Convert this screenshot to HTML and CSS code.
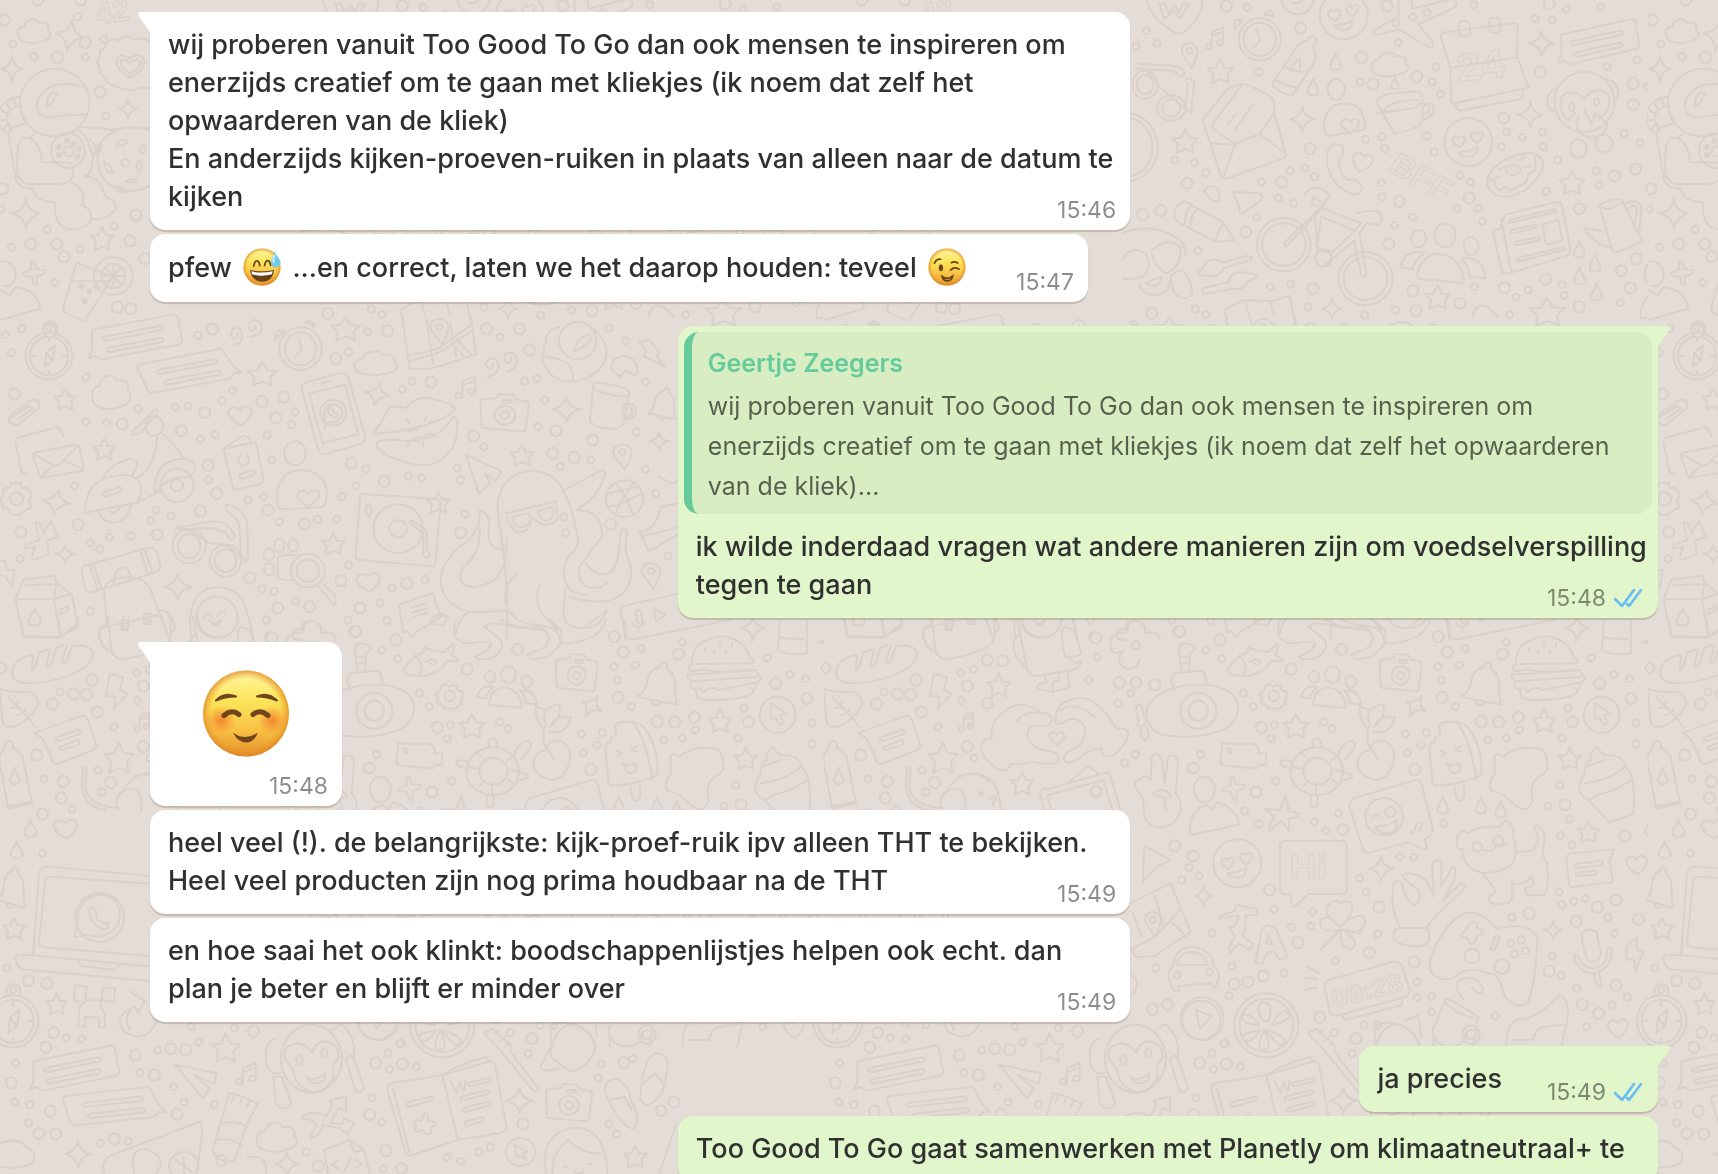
FILE: index.html
```html
<!DOCTYPE html>
<html lang="nl">
<head>
<meta charset="utf-8">
<meta name="viewport" content="width=device-width, initial-scale=1">
<title>Chat met Geertje Zeegers</title>
<link rel="stylesheet" href="styles.css">
</head>
<body>
<svg class="wallpaper" aria-hidden="true">
  <defs>
    <path id="star" d="M0-36L12-11L34-9L19 9L23 34L1 23L-21 35L-18 8L-33-9L-11-11Z"/>
    <path id="spark" d="M0-38Q3-5 33 0Q5 6 0 38Q-5 6-33 0Q-5-5 0-38Z"/>
    <path id="heart" d="M0-14C12-36 36-20 26 2Q20 18 4 32Q-20 16-26-2C-28-22-8-28 0-14Z"/>
    <path id="drop" d="M0-26C3-10 16 2 14 14C12 28-12 28-14 14C-15 2-3-10 0-26Z"/>
    <path id="note" d="M-12 30V-12L18-26V20M-12 30a8 8 0 1 1-8-8q8 0 8 8M18 20a8 8 0 1 1-8-8q8 0 8 8M-12 0L18-14"/>
    <path id="cloud" d="M-44 30C-60 4-44-10-32-10C-26-36 6-38 12-22C34-26 46-14 40-2C58 16 40 30 28 32Q-10 48-44 30Z"/>
    <g id="pin"><path d="M6 40C0 22-20 4-20-14C-20-46 22-44 22-12C22 6 14 22 6 40Z"/><ellipse cx="1" cy="-13" rx="8" ry="9"/></g>
    <g id="camera"><path d="M-48-38L-20-42L-14-54L20-52L26-38L50-32Q56-30 56-22L48 52Q46 60 38 58L-48 48Q-56 46-54 38L-56-30Q-56-38-48-38Z"/><ellipse rx="24" ry="28" cy="10"/><ellipse rx="10" ry="11" cy="10"/><path d="M-4-36H16V-28H-4Z"/></g>
    <g id="bell"><path d="M-60 50C-20 20-50-44 0-62Q4-80 16-74Q26-66 16-56C52-30 34 20 46 80Z"/><path d="M-24 66q10 26 28 6"/></g>
    <g id="mail"><path d="M-64-12L40-42Q50-44 52-34L64 46Q64 54 56 56L-40 82Q-48 84-50 74L-66 0Q-68-10-64-12ZM-64-8L-14 36L0 34L48-38M-46 78L-14 36M62 50L14 18"/></g>
    <g id="chat"><path d="M-100-30L84-76Q96-78 98-68L108 0Q108 10 98 14L-76 58L-94 48L-108 54L-100 30Z"/><path d="M-72-10L56-42q12 0 6 12L-66 2q-12-2-6-12ZM-64 24L56-6q12 0 6 12L-58 36q-12-2-6-12Z"/></g>
    <g id="people"><ellipse cx="0" cy="-52" rx="28" ry="36"/><ellipse cx="-70" cy="-42" rx="20" ry="26"/><ellipse cx="70" cy="-20" rx="20" ry="26"/><path d="M-74 72C-70-22 44-18 50 84Q50 94 40 90L-70 78ZM-120 44C-110 0-80-8-56 2Q-76 14-86 50ZM44 18C80 10 104 30 108 76L66 72Q62 36 44 18Z"/></g>
    <g id="smile"><ellipse rx="64" ry="72"/><path d="M-26 30Q4 28 24 16Q24 42 2 44Q-18 44-26 30Z"/><use href="#heart" transform="translate(-26 -2) scale(.6)"/><use href="#heart" transform="translate(22 -16) scale(.6)"/></g>
    <g id="compass"><ellipse rx="54" ry="70"/><ellipse rx="44" ry="58"/><path d="M-10 32L-6-10L14-32L8 14ZM-6-10L8 14M0-56v12M0 44v12M-42 0h10M32 0h10"/><path d="M-10-68C-30-108 30-112 12-68"/><ellipse cy="-84" rx="7" ry="8"/></g>

    <symbol id="tile" viewBox="0 0 824 1174" width="824" height="1174">
      <!-- upper right part of the tile -->
      <g transform="translate(306 0) scale(.375 .3333)">
        <path d="M44-10C44 40 90 80 130 104C160 90 200 40 192-10M78 12L92 58L118 34L134 56L158 10L140 12L132 38L118 14L104 40L92 10Z"/>
        <use href="#note" x="230" y="108"/><use href="#pin" x="158" y="166"/><use href="#star" x="240" y="214"/>
        <ellipse cx="346" cy="118" rx="56" ry="63"/><ellipse cx="346" cy="118" rx="43" ry="50"/><path d="M336 88L348 118L332 142M358 44q16-24 26 4ZM278 86q-4-34 22-24Z"/>
        <path d="M404-10C404 60 490 60 490-10M434 8q20 4 26-10"/>
        <use href="#smile" x="570" y="46"/>
        <path d="M716-10V48L660 86Q640 104 664 104L718 88L794 140Q816 148 804 118L768 74L860 26Q880 12 862-4L752 26V-10"/>
        <path d="M476 114q6-10 20 0q4 10-8 24q14 30 0 56L434 284Q428 294 384 262Q376 256 386 240L446 138Q460 120 474 124ZM410 196Q440 224 482 212M386 240Q420 260 446 262"/><use href="#drop" transform="translate(446 194) rotate(20) scale(.8)"/>
        <use href="#drop" x="548" y="186"/><use href="#drop" x="488" y="262"/><use href="#drop" transform="translate(706 250) scale(.7)"/><use href="#cloud" x="694" y="190"/>
        <path d="M832 98L1024 70Q1034 70 1034 82L1032 172L1064 262L866 310Q858 310 856 300L854 204L828 108ZM854 204L1032 172M866 310L876 332L1046 296L1048 270"/><rect x="876" y="64" width="30" height="44" rx="12"/><rect x="958" y="54" width="30" height="44" rx="12"/>
        <text x="876" y="246" font-size="118" transform="rotate(-8 876 246)">24</text>
        <use href="#spark" x="1097" y="130"/><use href="#chat" x="1250" y="134"/><use href="#cloud" transform="translate(1480 92) scale(.8 1)"/><use href="#spark" x="1414" y="208"/><use href="#spark" x="1068" y="344"/><use href="#spark" x="460" y="358"/>
        <path d="M24 192L110 196Q150 204 144 226Q136 236 118 214L40 206M148 240Q166 226 172 252L162 340L148 326L154 250M14 206L40 206L80 262L148 326"/><ellipse cx="40" cy="254" rx="34" ry="42"/><ellipse cx="110" cy="324" rx="38" ry="38"/><ellipse cx="40" cy="254" rx="22" ry="28"/><ellipse cx="110" cy="324" rx="24" ry="26"/>
        <ellipse cx="-10" cy="442" rx="84" ry="102"/><ellipse cx="-10" cy="442" rx="70" ry="88"/>
        <path d="M264 262L300 252Q312 250 372 288Q384 296 384 310L386 344L416 462Q416 472 406 476L262 534Q248 538 242 526L196 370Q194 356 202 348ZM300 252L222 370Q216 382 224 390L280 432L346 402L382 342M214 430L280 434M250 528L280 434M346 402L414 460M280 388L326 316M262 372L282 342"/>
        <ellipse cx="550" cy="268" rx="23" ry="32"/><path d="M520 404C510 350 530 310 572 310C610 310 628 340 626 388L530 408ZM586 400L564 378C560 354 584 350 588 366C600 346 616 360 608 380Z"/>
        <path d="M658 308Q660 290 690 282L756 274Q782 274 780 296V360Q770 390 704 400ZM658 340L760 324L780 306M674 336Q690 300 770 300M782 318Q800 300 810 320Q812 350 780 360M782 342Q800 340 798 320"/>
        <use href="#star" x="146" y="424"/><use href="#smile" x="902" y="426"/>
        <path d="M528 450Q540 426 566 436L568 462L556 484Q560 520 578 540L602 538L620 562Q616 588 590 582C540 560 516 500 528 450Z"/><use href="#heart" transform="translate(618 484) rotate(20)"/>
        <text x="684" y="510" font-size="92" transform="rotate(32 684 510)">BFF</text>
        <path d="M960 520Q990 468 1070 458Q1104 466 1102 500Q1080 570 1010 590Q950 590 952 540ZM954 546Q968 520 976 560Q986 578 1000 560Q1016 580 1030 560Q1060 556 1062 520Q1088 520 1080 470"/><ellipse cx="1022" cy="510" rx="20" ry="15"/><path d="M1000 500l-18 10M1040 480l12-8M1050 500l16 0M990 530l-14 4"/>
        <ellipse cx="1212" cy="306" rx="80" ry="90"/><path d="M1148 300C1150 270 1200 270 1212 300C1220 264 1274 260 1278 296C1280 330 1270 340 1250 360M1148 300Q1144 340 1168 360L1186 340M1140 262Q1104 280 1116 320Q1124 336 1134 330M1262 236Q1300 240 1302 280Q1300 300 1292 300M1196 352Q1180 400 1230 414Q1270 410 1272 370L1240 340L1230 372L1212 332"/><ellipse cx="1178" cy="320" rx="7" ry="12"/><ellipse cx="1244" cy="306" rx="7" ry="12"/><ellipse cx="1196" cy="446" rx="22" ry="28"/><ellipse cx="1264" cy="430" rx="23" ry="26"/>
        <use href="#star" x="1178" y="548"/>
        <path d="M466 584Q478 556 512 566L532 584L512 624L616 670L600 692L540 756L498 740L510 650L596 690M512 624L416 740L410 730L516 614L490 590L484 612ZM606 640Q630 628 664 634Q680 660 662 674L632 668L612 700L630 820Q624 840 616 824L598 722L520 794M494 654L500 760"/>
        <ellipse cx="410" cy="734" rx="72" ry="80"/><ellipse cx="410" cy="734" rx="58" ry="64"/><ellipse cx="628" cy="836" rx="72" ry="80"/><ellipse cx="628" cy="836" rx="58" ry="64"/><ellipse cx="516" cy="776" rx="22" ry="24"/>
        <path d="M276 576L344 580Q360 590 350 600L300 640Q290 642 292 626ZM198 572Q210 548 234 566L240 606Q210 604 198 572M118 650Q120 610 146 604L250 668L278 720L230 726L124 664ZM146 670Q150 630 164 616M160 680Q164 640 182 626M228 722Q234 690 250 670"/>
        <path d="M-20 700Q50 666 120 710Q150 730 148 766M-20 780Q0 730 44 764Q60 800 36 830Q10 840-20 836M60 750Q100 710 134 740Q140 800 96 820Q66 800 58 760M108 830Q120 810 140 812Q170 850 164 884Q140 910 116 874ZM24 850Q30 886 70 886Q104 880 108 840M44 850Q60 836 86 832Q76 864 56 858Z"/>
        <path d="M180 812Q196 812 202 786Q230 770 246 788L310 768Q330 766 322 780L250 804Q236 836 206 826L186 828ZM192 866L264 846Q266 816 296 816L336 824Q342 836 316 842Q300 874 276 866L200 882Q188 880 192 866Z"/>
        <use href="#people" x="840" y="758"/>
        <path d="M1000 644L1138 606Q1150 604 1152 616L1174 746Q1174 764 1160 770L1010 820Q996 824 992 812L968 700Q968 688 986 686ZM990 656L1016 814M1012 660l120-32q8 2 4 8l-120 32q-10 0-4-8ZM1018 690l60-16q8 2 4 8l-60 18q-10 0-4-10ZM1028 726l60-14q8 2 4 8l-60 16q-10 0-4-10ZM1034 774l120-32q8 2 4 8l-120 34q-10 0-4-10ZM1100 672l42-12l12 60l-38 14q-8 0-8-10Z"/>
        <path d="M1252 616Q1276 596 1310 598L1366 724L1300 756Q1290 760 1284 746ZM1252 620Q1276 640 1316 604M1284 742Q1240 740 1212 684L1258 694M1322 610Q1352 594 1364 620L1358 690M1328 628Q1344 606 1352 630L1346 666"/>
        <use href="#drop" x="1198" y="748"/><use href="#drop" x="1240" y="790"/><use href="#drop" x="1198" y="828"/><use href="#drop" x="1244" y="876"/>
        <use href="#spark" transform="translate(1456 638) scale(1.2)"/><ellipse cx="1400" cy="822" rx="28" ry="38"/>
        <path d="M1362 956C1358 900 1390 880 1406 868L1416 886L1430 862C1470 868 1490 900 1490 928Z"/>
        <path d="M1470 786Q1480 780 1484 806L1506 808Q1512 818 1486 826Q1490 856 1480 854L1472 830L1450 832Q1444 820 1466 816Z"/>
        <use href="#star" x="820" y="892"/><use href="#spark" transform="translate(538 926) scale(.8)"/><use href="#star" transform="translate(1112 936) scale(1.4 1.2)"/>
        <path d="M260 980L252 928L304 900L374 904L426 888L442 980M308 906L318 950M376 910L384 950M914 950Q920 910 950 918L980 950"/>
        <path d="M1568 206C1400 196 1400 410 1560 410M1440 290Q1380 300 1380 360Q1384 400 1410 404M1450 374Q1410 376 1410 400L1432 540Q1440 566 1470 568M1568 260Q1500 240 1486 320Q1490 360 1568 344"/>
        <g class="rings"><path id="r1" d="M257 18h.1M455 84h.1M617 172h.1M765 230h.1M648 252h.1M480 446h.1M152 550h.1M34 644h.1M82 632h.1M308 696h.1M404 546h.1M718 604h.1M1094 216h.1M996 354h.1M1342 250h.1M1342 314h.1M1398 60h.1M1118 12h.1M686 18h.1M1348 508h.1M1292 528h.1M1392 566h.1M1310 812h.1M1334 864h.1M1108 838h.1M1198 626h.1M1538 734h.1M1350 776h.1M998 864h.1M880 910h.1M754 872h.1M488 866h.1M690 732h.1M762 932h.1M1198 920h.1M904 594h.1M58 940h.1M1538 174h.1"/><use href="#r1" class="core"/></g>
        <g class="rings small"><path id="r2" d="M16 138h.1M72 130h.1M44 92h.1M312 22h.1M344 216h.1M120 480h.1M172 488h.1M202 518h.1M350 546h.1M426 512h.1M466 504h.1M492 530h.1M396 594h.1M436 610h.1M338 652h.1M182 752h.1M374 860h.1M428 852h.1M174 928h.1M202 944h.1M474 922h.1M716 128h.1M816 200h.1M806 246h.1M828 282h.1M614 246h.1M628 418h.1M672 410h.1M680 446h.1M792 408h.1M812 456h.1M670 548h.1M672 590h.1M880 526h.1M908 546h.1M872 626h.1M928 624h.1M940 664h.1M706 676h.1M754 652h.1M1004 396h.1M1046 412h.1M1100 396h.1M1102 440h.1M990 440h.1M1140 480h.1M1110 574h.1M1244 512h.1M1250 556h.1M1318 400h.1M1360 428h.1M1272 200h.1M1352 180h.1M1380 260h.1M1420 132h.1M1478 170h.1M1080 56h.1M1126 60h.1M1164 28h.1M1256 20h.1M916 14h.1M754 52h.1M792 38h.1M710 68h.1M1390 628h.1M1418 740h.1M1468 732h.1M1512 688h.1M1532 848h.1M1152 854h.1M1158 886h.1M1062 870h.1M1030 892h.1M1012 944h.1M918 860h.1M708 930h.1M626 946h.1M1308 908h.1"/><use href="#r2" class="core"/></g>
      </g>
      <!-- upper left part: astronaut and lemonade -->
      <g transform="scale(.3333)">
        <use href="#cloud" x="104" y="90"/><use href="#spark" transform="translate(210 106) rotate(10) scale(1.3)"/><use href="#spark" x="36" y="206"/>
        <text x="290" y="74" font-size="92" transform="rotate(-8 290 74)">42</text>
        <ellipse cx="164" cy="308" rx="104" ry="102"/><path d="M262 266C220 246 150 240 118 290C100 330 120 352 150 352C200 340 230 348 260 342M140 312Q142 284 162 276Q178 280 160 302Q146 326 140 312Z"/>
        <path d="M62 288Q0 300-10 350Q0 390 24 404M66 316Q30 320 20 350Q22 370 30 384M40 294l8 24M18 308l12 20M4 330l18 12M0 360h20M6 386l18-10M74 372Q26 376 26 410L48 540Q60 566 96 566M52 520Q48 420 70 412Q120 412 126 486L210 488Q224 500 218 530Q210 556 150 552H90Q56 548 52 520M90 412L104 402M96 552Q100 606 160 606H166Q158 690 220 688Q274 680 274 650Q272 620 240 614L250 616Q254 556 214 548M238 390Q270 420 278 470Q278 520 254 528Q300 530 316 590Q352 600 346 630Q320 660 276 658M280 470Q300 440 270 420"/>
        <ellipse cx="204" cy="452" rx="50" ry="52"/><ellipse cx="206" cy="454" rx="15" ry="15"/>
        <path d="M320 128Q340 110 356 122Q380 100 404 120Q430 110 450 124M320 128Q316 150 300 150Q304 170 290 186Q306 208 298 220Q320 230 318 244Q336 256 346 258Q370 270 384 268Q400 276 420 264H450M390 232Q350 212 350 186Q352 152 388 176Q424 152 434 186Q430 212 390 232ZM390 220Q362 206 362 186Q370 170 390 188Q412 170 422 188Q416 208 390 220Z"/>
        <path d="M242 382Q280 380 330 390Q390 380 450 384M450 392Q400 370 344 394Q280 420 296 500Q310 560 370 572Q420 576 450 558M288 462Q286 430 304 432Q304 460 288 462ZM348 436Q360 414 384 422Q372 444 348 436ZM312 486Q330 490 340 520Q316 520 312 486ZM344 560Q370 558 380 574Q360 586 344 560ZM378 544Q396 532 410 544Q396 550 378 544Z"/><ellipse cx="376" cy="488" rx="12" ry="11"/><ellipse cx="418" cy="498" rx="8" ry="14"/><ellipse cx="428" cy="448" rx="9" ry="12"/>
        <use href="#spark" transform="translate(384 326) scale(.8)"/><use href="#spark" transform="translate(78 640) scale(1.3 1.2)"/><use href="#star" x="306" y="716"/>
        <path d="M230 788L338 830L256 960Q252 966 196 938Q188 934 190 922ZM218 844H326"/><ellipse cx="340" cy="828" rx="58" ry="57"/><ellipse cx="340" cy="828" rx="35" ry="37"/><path d="M306 828h68M340 792v72M316 802l48 52M364 802l-48 52"/>
        <path d="M94 784Q104 780 108 806L136 812Q138 824 110 828L112 854Q102 860 96 832L68 826Q66 814 92 810Z"/>
        <path d="M0 784Q46 780 48 830Q40 860 10 858M0 870L30 886L46 862Q116 870 120 926L0 960"/><ellipse cx="150" cy="988" rx="22" ry="24"/>
        <g class="rings"><path id="r3" d="M14 60h.1M242 0h.1M172 172h.1M256 128h.1M300 276h.1M8 566h.1M408 646h.1M92 732h.1M170 732h.1M192 770h.1M390 722h.1M352 922h.1M392 926h.1M114 0h.1M434 776h.1"/><use href="#r3" class="core"/></g>
        <g class="rings small"><path id="r4" d="M38 132h.1M102 170h.1M256 172h.1M232 50h.1M312 118h.1M318 348h.1M4 628h.1M142 688h.1M342 678h.1M240 748h.1M34 742h.1M164 848h.1"/><use href="#r4" class="core"/></g>
        <path class="dots" d="M245 860h.1M290 860h.1M268 874h.1M254 904h.1M200 422h.1M222 430h.1M176 440h.1M178 464h.1M236 446h.1M232 470h.1"/>
      </g>
      <!-- middle band -->
      <g transform="translate(0 320) scale(.4337 .3333)">
        <use href="#compass" x="113" y="108"/><use href="#chat" transform="translate(312 60)"/><use href="#chat" transform="translate(436 160) scale(-1 1) rotate(28)"/>
        <path d="M540 74Q560 70 558 44Q556 22 542 24Q526 34 536 54Q550 58 548 40M580 50Q606 44 604 20Q600-6 580 2Q566 18 578 30Q590 34 588 16M1126 170Q1152 160 1150 136Q1146 110 1128 116Q1112 130 1126 144Q1140 148 1136 130M1168 154Q1194 146 1192 120Q1188 94 1170 98Q1156 112 1168 128Q1180 132 1178 112"/>
        <ellipse cx="693" cy="86" rx="49" ry="64"/><ellipse cx="693" cy="86" rx="36" ry="50"/><path d="M688 54L696 88L680 112M634 58q0-34 22-26ZM704 8q14-14 22 12Z"/>
        <use href="#star" x="796" y="26"/><use href="#star" x="604" y="162"/><use href="#star" transform="translate(150 238) scale(.75 .9)"/><use href="#star" transform="translate(240 388) scale(.75 .9)"/><use href="#cloud" x="868" y="126"/><use href="#cloud" transform="translate(258 212) scale(.9 1.4)"/>
        <path d="M928-6L944 146L994 146L1098 104L1086-6M944 106L1010 86L1084 16M944 124L1016 96L1086 34M1052 56L1086 104M1040 68L1070 110M984 0L998 130M1038 10L1052 110"/><use href="#pin" x="1012" y="34"/>
        <path d="M1258 70Q1256 30 1290 22M1254 70V106Q1244 114 1262 150Q1282 190 1330 184Q1400 160 1398 90Q1390 40 1362 22M1254 110Q1330 116 1320 184"/><ellipse cx="1332" cy="62" rx="43" ry="56"/><path d="M1324 94Q1330 50 1360 42Q1372 70 1324 94ZM1430 170Q1400 150 1416 120Q1440 94 1462 122Q1476 150 1464 168L1444 150ZM1474 64L1498 60L1520 98L1514 108L1532 140L1484 108L1490 92Z"/>
        <path d="M24 310Q14 300 30 280L70 242Q90 232 92 260L40 316ZM28 292L66 258L76 266L40 298"/>
        <path d="M40 354L130 322Q140 322 146 350M60 460Q52 462 48 450L36 364"/><use href="#mail" transform="translate(136 408) scale(.9 .8)"/>
        <path d="M306 344Q304 330 320 318L356 270Q370 266 358 292L340 310Q330 346 306 344ZM362 350Q360 440 316 474M376 342Q400 370 424 414M196 578Q196 500 240 476Q300 450 322 486Q330 520 316 548ZM236 476Q256 430 300 416Q330 420 304 466M356 520Q354 420 420 416Q450 420 450 444Q446 474 420 472Q390 470 356 520ZM196 578L316 548L372 512"/><ellipse cx="356" cy="318" rx="20" ry="30"/><ellipse cx="408" cy="496" rx="38" ry="50"/><ellipse cx="408" cy="496" rx="14" ry="18"/><path d="M228 574C236 624 300 620 302 548M250 568Q264 590 278 560M240 516L276 502Q286 506 274 518L244 530Q236 526 240 516Z"/>
        <use href="#heart" x="552" y="284"/><path d="M516 386L590 366L608 482Q608 490 600 492L546 508Q538 510 536 500ZM516 384L560 348Q572 344 578 366M554 462L582 450Q592 454 584 466L558 476Q548 472 554 462ZM556 402Q540 430 560 438Q584 430 568 402"/>
        <path d="M708 186L784 160Q800 158 804 176L842 350Q842 366 830 372L752 402Q738 404 734 390L696 210Q694 192 708 186ZM712 220L796 194L826 342L744 370ZM742 190l16-6"/><ellipse cx="768" cy="278" rx="30" ry="38"/><path d="M748 324L748 292Q746 252 770 254Q794 262 788 290Q776 310 760 306ZM760 262Q750 276 768 292Q780 296 780 282L770 278L764 264"/>
        <use href="#spark" transform="translate(870 222) rotate(12) scale(.9)"/><use href="#note" x="1078" y="196"/>
        <path d="M862 342L898 264Q906 256 936 264Q956 232 980 234Q1030 240 1050 266Q1040 290 980 316Q920 338 862 342ZM870 366Q860 384 900 410Q950 440 990 434Q1060 410 1054 300Q1046 280 1040 300Q1010 360 940 364Q890 352 870 366ZM930 326Q936 340 956 328Q964 334 966 316Q980 326 994 302M936 296l8 16M984 286l-4 16M940 382l6-20Q970 344 976 352Q998 330 1004 352M976 384v-16"/>
        <use href="#camera" x="1164" y="276"/><use href="#spark" x="1306" y="268"/>
        <path d="M1368 200L1360 300Q1370 330 1420 326L1438 312L1450 220M1368 200Q1364 182 1400 192Q1452 202 1452 220Q1450 236 1410 224Q1370 216 1368 200ZM1440 252Q1470 246 1466 280Q1456 306 1436 292"/><ellipse cx="1446" cy="274" rx="12" ry="16"/>
        <use href="#bell" transform="translate(1530 250) scale(.6 .6)"/><use href="#spark" transform="translate(1520 364) scale(.7)"/>
        <ellipse cx="680" cy="400" rx="25" ry="36"/><path d="M642 562C630 500 650 450 696 450C740 452 758 490 752 540Q750 560 738 562L650 568ZM712 562L688 538C680 510 706 504 712 522C722 500 742 512 734 534Z"/>
        <path d="M1074 404L1156 454L1142 484L1118 460L1130 490L1104 520Z"/><use href="#star" transform="translate(1203 406) scale(.8 .9)"/><use href="#pin" x="1434" y="410"/>
        <ellipse cx="38" cy="536" rx="15" ry="20"/><path d="M26 488h20l4 16l14 0l10 24l-8 12l6 22l-18 12l-10 12l-18-4l-6-14l-14-6l-4-24l6-14l0-18l14-4Z"/>
        <use href="#spark" transform="translate(130 546) rotate(10)"/><use href="#spark" transform="translate(150 702) scale(.7)"/>
        <path d="M82 608Q90 602 96 620L100 640L118 602L132 652L110 662L112 704L76 720Q70 712 82 680Q60 690 54 680L90 660Z"/>
        <path d="M188 752Q186 740 200 736L340 684Q356 680 362 696L370 740Q368 752 356 758L214 816Q200 820 196 804ZM208 740L226 812M216 736L234 808M324 692L342 764M334 688L352 760M262 790C262 730 300 730 302 776M242 800Q250 776 290 772Q334 770 346 806L388 950M240 806L246 920L362 886M230 960Q220 920 246 920M366 870Q400 870 402 930M280 900h14v30h-14ZM332 882h14v30h-14Z"/>
        <path d="M54 778L126 768L130 790L166 824L178 910L140 952L54 952L36 838ZM36 838L124 838L162 822M124 838L140 950M124 838L130 792L58 796M140 868l18-12v14l-18 12Z"/><use href="#drop" x="80" y="892"/>
        <path d="M404 624L490 604Q530 604 542 650Q534 670 520 640Q500 616 420 630M520 554Q560 560 570 610L572 720L556 730L552 620Q548 590 524 576ZM404 624L440 632L480 668L520 676L572 724"/><ellipse cx="436" cy="678" rx="38" ry="52"/><ellipse cx="520" cy="722" rx="36" ry="48"/><ellipse cx="436" cy="678" rx="26" ry="36"/><ellipse cx="520" cy="722" rx="25" ry="34"/>
        <use href="#spark" x="410" y="800"/><path d="M442 960C430 860 450 800 506 802C560 806 570 860 584 960M470 894q8-20 18-6M502 888q10-20 16-8M484 904q14 20 26 0"/><ellipse cx="500" cy="892" rx="48" ry="62"/>
        <ellipse cx="620" cy="704" rx="12" ry="18"/><ellipse cx="644" cy="676" rx="12" ry="20"/><ellipse cx="676" cy="676" rx="12" ry="18"/><ellipse cx="620" cy="748" rx="12" ry="18"/><ellipse cx="710" cy="752" rx="39" ry="50"/><ellipse cx="710" cy="752" rx="26" ry="34"/><path d="M690 706Q640 700 640 720V770Q650 784 676 780M734 798L770 856Q780 840 768 820L746 794"/>
        <use href="#star" transform="translate(768 672) scale(.8 .9)"/><use href="#heart" x="848" y="784"/>
        <path d="M836 522L1004 536Q1016 538 1016 550L1004 730Q1002 740 994 738L830 720Q820 718 820 708L830 530Q832 522 836 522ZM950 600L984 634V690L992 706L984 716L976 704V640L944 606ZM850 550l8 20l-8 24l-8-24Z"/><ellipse cx="918" cy="626" rx="57" ry="73"/><ellipse cx="918" cy="626" rx="20" ry="26"/><use href="#star" transform="translate(1010 548) scale(.8 .9)"/>
        <path d="M920 854L998 820L1016 890L956 940L948 952L940 934L930 936ZM948 864L980 850M950 878L984 866M956 890L986 878M994 894l24-14l4 8l14 0l-8 14l-6 16l-14-6l-12 2Z"/>
        <path d="M1168 960C1180 700 1130 560 1154 520C1170 440 1260 430 1292 496Q1320 560 1330 640Q1340 680 1310 710C1290 770 1300 820 1350 824M1106 570Q1130 580 1128 620Q1120 680 1150 686Q1170 690 1168 650M1106 570Q1110 640 1060 680C990 760 1010 850 1080 876C1130 880 1160 870 1170 870M1106 620Q1110 700 1070 740C1040 800 1090 820 1140 780Q1170 740 1168 680M1192 764Q1160 790 1166 850Q1180 910 1240 916Q1290 920 1290 960M1244 794Q1230 840 1250 880L1286 930M1296 514L1380 456Q1402 440 1394 468Q1380 530 1330 570Q1390 570 1388 650Q1360 700 1336 740C1330 800 1360 820 1400 790M1350 730Q1380 780 1410 756Q1430 720 1430 640Q1440 610 1446 640C1430 720 1470 730 1450 790C1430 860 1360 850 1310 830M1304 810C1300 860 1290 900 1320 920Q1380 940 1400 870L1360 910M1052 940Q1060 880 1090 874M1120 920Q1130 900 1180 920L1250 930"/>
        <path d="M1166 580L1282 544L1286 594Q1280 614 1260 614Q1240 612 1228 592L1224 610Q1216 640 1190 636Q1174 620 1166 580ZM1180 590L1220 580Q1226 620 1200 622Q1184 620 1180 590ZM1240 574L1274 560Q1280 600 1258 602Q1244 600 1240 574Z"/>
        <ellipse cx="1440" cy="536" rx="43" ry="55"/><path d="M1400 520Q1440 510 1470 500M1404 560Q1440 550 1480 520M1420 490Q1450 540 1460 586M1460 490Q1430 540 1420 580M1474 632Q1510 640 1524 560L1568 548M1474 632L1496 694L1568 640M1478 650L1568 620M1518 470L1550 490L1568 480M1430 860L1568 820M1430 860L1442 956M1464 876q8-14 14 0l4 30q-6 12-12 0ZM1458 910q14 24 30-4M1472 920v16M1508 866l26 18l-22 20Z"/><use href="#pin" transform="translate(1500 766)"/>
        <path d="M700 960Q660 960 680 930Q700 920 700 930Q700 900 720 904Q744 910 740 940Q770 930 774 960"/>
        <path d="M0 720L12 724L16 750L34 750L28 802L14 770L0 766"/>
        <g class="rings"><path id="r5" d="M490 28h.1M894 32h.1M1122 26h.1M1198 26h.1M1220 90h.1M774 116h.1M994 186h.1M34 222h.1M472 278h.1M282 312h.1M418 332h.1M654 232h.1M604 244h.1M636 294h.1M480 436h.1M500 520h.1M886 484h.1M810 430h.1M1092 348h.1M1282 332h.1M1366 360h.1M1324 412h.1M1274 400h.1M180 614h.1M48 636h.1M362 644h.1M618 570h.1M702 612h.1M1062 638h.1M1408 612h.1M640 864h.1M714 860h.1M830 864h.1M938 790h.1M786 782h.1M576 774h.1M462 574h.1M818 934h.1M624 952h.1"/><use href="#r5" class="core"/></g>
        <g class="rings small"><path id="r6" d="M12 44h.1M50 26h.1M26 98h.1M198 172h.1M456 46h.1M848 34h.1M804 96h.1M1152 52h.1M1404 24h.1M1442 62h.1M1210 184h.1M1238 176h.1M950 184h.1M928 208h.1M536 212h.1M512 242h.1M404 262h.1M434 258h.1M318 266h.1M198 306h.1M246 308h.1M680 276h.1M672 314h.1M616 346h.1M626 420h.1M462 358h.1M496 344h.1M480 480h.1M572 540h.1M608 530h.1M820 498h.1M788 530h.1M844 446h.1M942 468h.1M972 474h.1M1054 444h.1M1062 480h.1M1116 380h.1M1240 320h.1M1256 240h.1M1292 440h.1M1362 420h.1M1468 336h.1M1488 186h.1M1488 448h.1M1512 520h.1M1072 582h.1M644 606h.1M732 598h.1M776 598h.1M360 570h.1M394 588h.1M348 602h.1M172 498h.1M252 652h.1M302 648h.1M208 668h.1M230 686h.1M46 716h.1M604 806h.1M632 814h.1M682 844h.1M804 736h.1M904 806h.1M980 778h.1M876 850h.1M892 902h.1M802 900h.1M614 900h.1M208 874h.1M1540 708h.1M1300 592h.1M1304 638h.1"/><use href="#r6" class="core"/></g>
      </g>
      <!-- lower right part: burger, cat, gamepad -->
      <g transform="translate(306 620) scale(.375 .3333)">
        <path d="M50 310C20 240 100 190 200 194C280 200 300 250 284 290C260 350 160 356 90 346Q60 336 50 310ZM118 210L110 180Q110 162 130 158L190 152Q200 152 204 190M138 156L130 90Q130 70 150 70L172 76Q176 90 160 100L158 154M134 110h26M136 130h24M22 254Q10 270 22 296L20 316Q40 324 42 300Q36 280 34 270Q30 250 22 254ZM30 322Q24 350 40 364Q56 350 44 322"/><ellipse cx="182" cy="272" rx="48" ry="54"/><ellipse cx="182" cy="272" rx="26" ry="30"/>
        <path d="M260 150Q280 110 314 96L316 80Q330 96 370 96L392 72Q400 74 388 106Q410 114 406 124Q390 124 376 122Q350 170 300 168Q260 166 260 150ZM292 104Q316 140 304 166M320 126Q340 110 348 126Q340 140 330 130"/>
        <use href="#people" transform="translate(540 200) scale(.7)"/><use href="#camera" x="722" y="156"/><use href="#spark" transform="translate(762 258) rotate(30) scale(.9)"/><use href="#star" x="442" y="318"/>
        <ellipse cx="384" cy="228" rx="13" ry="16"/><path d="M372 194l10 6l10-6l10 6l2 10l14 6l0 14l-6 12l4 12l-14 6l-8 8l-12-4l-12 2l-8-12l-12-4l2-14l-6-14l12-10l2-14Z"/>
        <use href="#bell" transform="translate(944 190) scale(1 .8)"/>
        <path d="M1030 130Q1026 60 1110 48Q1170 60 1182 110Q1200 120 1190 130L1040 132M1030 130Q1010 146 1030 154L1060 148L1100 156L1200 150Q1214 170 1190 172L1030 184Q1010 172 1020 164L1180 152M1026 190Q1020 206 1040 208Q1050 196 1060 216Q1080 196 1100 210L1200 188Q1220 176 1210 170M1040 212Q1040 244 1080 240Q1160 240 1190 220L1202 190M1064 86v10M1104 70v8M1136 70v10M1088 92v8M1120 92v6"/>
        <path d="M1264 0L1258 90Q1290 110 1336 100V0M1260 50Q1300 62 1336 54"/><use href="#spark" x="1192" y="24"/><use href="#spark" x="1400" y="66"/>
        <path d="M848 0L854 52Q860 60 880 56L1130 0M400 0Q380 70 440 70Q490 60 494 74Q480 100 450 110Q460 124 500 112Q540 80 510 50L476 20M520 0Q570 30 620 20Q660 40 640 80L590 104Q590 124 640 112Q690 80 680 30L650 0M680 70Q780 70 800 0"/>
        <path d="M1386 206L1470 220Q1500 240 1480 270Q1450 290 1440 316Q1400 330 1390 300ZM1410 240L1474 310M1430 236l6 36M1450 260l-10 20M1410 270h24"/>
        <path d="M1416 180Q1410 110 1474 100Q1470 160 1480 150L1490 96Q1520 80 1510 140Q1530 120 1530 90Q1560 70 1568 80M1416 180Q1440 200 1568 170M1480 336L1568 306M1480 336L1510 360L1534 430L1568 420M1534 350l34-12M1540 376l28-10"/>
        <path d="M246 370L330 372L344 386L342 402L362 398V436L346 434L338 446L250 436Q240 434 242 424ZM262 384q12 0 8 14q-12 0-8-14"/>
        <ellipse cx="498" cy="454" rx="70" ry="72"/><ellipse cx="500" cy="454" rx="38" ry="40"/><path d="M488 384Q486 350 500 354Q512 360 508 382M556 400Q580 350 600 366Q604 384 572 420M428 446Q400 440 400 426Q410 416 436 426M484 524Q478 560 490 562Q504 560 500 526M566 458Q596 460 592 474L562 484M458 400l18 18M536 420l20-14M460 500l16-18M540 480l20 14M496 496v28M430 440l28 8M546 450l24 4"/>
        <path d="M638 390C580 410 610 480 660 480C700 470 720 400 690 370Q660 350 640 380L662 420M640 384Q626 350 640 310M632 330Q610 290 612 260L640 270M640 310Q620 270 672 252Q690 280 650 320M650 320Q670 280 706 292Q700 340 650 336"/>
        <path d="M798 380Q796 370 814 368Q810 350 828 344Q818 310 840 306Q870 300 900 320Q940 380 938 460Q920 484 820 498Q808 498 806 480ZM866 306Q900 330 924 474M866 500Q866 540 880 542Q896 540 890 494M826 392l16 6l-12 10M884 378l-18 10l16 6M844 432Q870 440 880 430Q884 460 864 460Q850 456 852 438"/>
        <path d="M972 410Q980 396 996 410Q1040 370 1100 390Q1124 430 1106 460Q1060 480 1074 540Q1060 590 1020 550Q1000 520 964 512Q952 490 974 460Z"/>
        <use href="#star" transform="translate(1104 304) scale(.95)"/><use href="#star" transform="translate(1172 416) scale(.9)"/><use href="#star" transform="translate(1222 636) scale(.9)"/><ellipse cx="1258" cy="284" rx="48" ry="54"/><path d="M1240 250L1280 280L1264 286L1272 310L1262 314L1252 292L1240 300Z"/>
        <path d="M1212 460Q1210 430 1230 420Q1220 400 1246 380Q1260 410 1280 406Q1320 410 1320 440Q1350 460 1342 580L1280 608L1226 544Q1190 520 1200 490ZM1214 440L1270 420M1212 490Q1280 480 1320 440M1226 540L1250 524L1290 510L1340 480"/>
        <path d="M1396 390Q1390 360 1410 362Q1424 370 1418 388Q1444 400 1448 440L1470 550L1408 566L1382 420Q1380 400 1396 390M1404 558l60-14"/><use href="#drop" x="1424" y="470"/><use href="#drop" x="1388" y="624"/><use href="#drop" x="1468" y="630"/><use href="#drop" x="1432" y="692"/><use href="#drop" x="834" y="556"/><use href="#drop" x="936" y="556"/><use href="#drop" x="988" y="568"/>
        <path d="M36 540L14 500Q10 480 30 476Q40 460 56 480L58 410Q74 390 86 420L92 490L102 410Q120 400 128 420L122 520C150 560 130 620 80 622C40 620 34 590 36 540ZM58 520Q90 500 104 520Q120 540 80 530ZM92 540l4 30"/>
        <ellipse cx="198" cy="508" rx="28" ry="38"/><path d="M160 646C154 590 180 560 206 554L218 572L230 548C270 554 290 590 290 614Z"/><path d="M270 470Q278 466 280 492L306 494Q310 508 284 512L284 540Q276 546 268 516L246 514Q244 504 268 496Z"/>
        <path d="M414 526L424 574L452 580Q454 590 424 596L424 632L404 602L372 632Q366 622 384 590L358 566L400 570Z"/>
        <path d="M584 556L594 536L760 480Q774 478 778 492L808 630Q806 650 786 656L792 690L740 668L636 698Q624 698 620 684ZM748 634L756 640L764 612M770 636L780 608"/><ellipse cx="678" cy="590" rx="50" ry="56"/><path d="M646 594q10-16 18-4M654 620Q690 620 710 600Q716 640 690 640Q660 640 654 620"/><ellipse cx="694" cy="576" rx="14" ry="16"/>
        <use href="#smile" x="286" y="730"/><path d="M412 662L568 662Q578 664 578 676V810Q578 822 568 822H476L438 860Q430 860 430 848V822L412 822Q400 822 400 810V676Q400 664 412 662Z"/>
        <text x="426" y="774" font-size="100">Hi</text>
        <path d="M38 676L108 720L72 740L34 786ZM0 850L108 790L162 936L66 1008L16 1012L0 980M0 990L68 950L136 866M66 826L90 920M8 880L30 950M112 908L150 950"/><use href="#pin" x="60" y="912"/>
        <use href="#spark" transform="translate(196 828) scale(.75)"/><use href="#spark" x="670" y="746"/><use href="#spark" transform="translate(1128 930) scale(.75)"/>
        <path d="M940 760Q960 790 972 804Q980 820 960 826Q952 850 970 852L1010 850Q1024 840 1018 790Q1050 800 1070 770Q1090 800 1054 804Q1050 824 1066 826H1104Q1120 800 1112 730C1080 680 1130 660 1088 616Q1070 620 1086 640Q1094 690 1060 694L1030 696M892 630Q870 640 872 668Q870 690 886 686C890 780 980 770 1020 730Q1036 700 1022 650Q1026 610 1002 602L984 620Q930 616 900 640ZM944 690Q970 700 976 676M916 694l14-2M988 680l20-10"/><ellipse cx="926" cy="680" rx="13" ry="14"/><ellipse cx="982" cy="662" rx="13" ry="14"/>
        <path d="M1180 700L1292 688L1278 720L1288 786L1180 802Q1172 802 1170 790L1164 712Q1168 700 1180 700ZM1190 732L1256 722q10 4 2 14L1192 744q-10-4-2-12ZM1192 758L1240 752q10 4 2 12L1194 768q-10-4-2-10Z"/><use href="#heart" x="1350" y="732"/><use href="#heart" x="1552" y="628"/><use href="#bell" transform="translate(1426 800) scale(.8 .75)"/>
        <path d="M1568 740H1510Q1490 740 1490 760L1476 1008L1568 1018M1568 772H1508L1492 990L1568 994M1426 1008L1568 1024M1426 1008L1434 1046L1568 1064"/>
        <path d="M238 890L280 872Q280 846 296 858L340 866L336 884L308 886Q310 920 300 950L328 970L320 990L290 970L266 1000L264 980L280 950L264 920L280 920L290 886L240 896ZM334 1030L352 926Q370 906 390 930L420 1010L400 1020L384 996L364 998L354 1030ZM362 970l6-24l12 26Z"/>
        <path d="M560 920Q510 880 528 856Q550 830 560 850Q590 834 594 860Q590 890 562 920Q610 870 628 896Q630 920 612 930Q640 950 566 928Q620 970 590 986Q560 990 562 930L508 990L556 930Q500 940 508 900Q530 880 560 920Z"/>
        <path d="M720 920Q690 860 704 790Q712 776 724 790Q740 850 756 854Q780 850 770 810Q730 780 726 764Q750 750 790 780L810 830L806 740Q810 710 830 726L830 800L860 740Q874 740 864 780L836 840L880 790Q904 790 880 820Q820 880 788 926M716 924H790Q800 930 798 960Q790 980 760 978Q706 976 702 950Q704 930 716 924Z"/>
        <path d="M800 1046C790 1000 860 880 900 878C940 874 960 910 980 928Q1040 910 1060 926Q1090 940 1086 970Q1080 1100 1060 1150Q1030 1170 1000 1130Q980 1050 960 1062Q910 1040 880 1060C850 1090 806 1080 800 1046ZM910 906q20-4 14 20q18 4 16 16q-16 4-18 14q0 18-18 14q0-20-16-18q-10-10 6-20Z"/><ellipse cx="912" cy="1008" rx="20" ry="22"/><ellipse cx="992" cy="1040" rx="20" ry="22"/><path d="M960 988L976 946l10 4L972 992Z"/>
        <path d="M1204 940Q1220 920 1244 936L1256 1000Q1250 1030 1226 1024Q1210 1010 1204 940ZM1184 1004Q1190 1060 1240 1060Q1290 1040 1284 986Q1270 980 1272 1000Q1270 1040 1236 1046Q1200 1040 1194 1004ZM1236 1060L1246 1100L1258 1096L1250 1056M1324 980L1352 950L1350 990L1370 992L1348 1054L1344 1020L1324 1018Z"/><use href="#star" transform="translate(1424 926) scale(.9)"/><use href="#star" transform="translate(1538 1154) scale(.9)"/><use href="#compass" transform="translate(1420 1202) scale(1.25 1.2)"/>
        <path d="M102 1070Q100 1050 114 1040Q120 980 168 980Q220 990 224 1040Q240 1050 236 1080L226 1104L212 1090L130 1098L128 1116L114 1110ZM124 1036Q130 996 166 996Q200 1000 206 1034ZM0 1066Q20 1070 18 1100Q10 1130 0 1126"/><ellipse cx="126" cy="1066" rx="9" ry="10"/><ellipse cx="212" cy="1056" rx="9" ry="10"/><ellipse cx="192" cy="1196" rx="57" ry="64"/><path d="M176 1168L218 1190L186 1226Z"/>
        <path d="M530 1080L700 1026Q720 1024 724 1036L746 1110Q744 1128 730 1132L550 1188Q536 1188 532 1170L518 1100Q518 1086 530 1080ZM566 1190L574 1200L724 1156L726 1140M474 1040l30 20M464 1074l34 2M464 1110l34-8"/><text x="546" y="1164" font-size="76" transform="rotate(-16 546 1164)">09:28</text>
        <path d="M810 1280L808 1230L840 1140Q850 1134 880 1156L928 1190L916 1280M840 1150Q870 1180 916 1196M890 1140Q860 1100 880 1080Q920 1060 940 1100Q944 1120 930 1120L910 1104M1004 1280Q1000 1190 1060 1196Q1100 1180 1140 1130Q1170 1120 1168 1190L1150 1280M1020 1260H1076Q1080 1220 1110 1220L1156 1214M656 1280Q670 1210 720 1214Q760 1230 774 1280M730 1204L768 1186L776 1250"/><use href="#heart" x="1300" y="1222"/>
        <g class="rings"><path id="r7" d="M132 34h.1M240 60h.1M66 194h.1M350 322h.1M168 444h.1M336 516h.1M372 810h.1M168 708h.1M120 678h.1M448 968h.1M356 1068h.1M314 1086h.1M278 1092h.1M60 1168h.1M100 1154h.1M506 1192h.1M602 1256h.1M638 998h.1M664 862h.1M568 628h.1M760 448h.1M846 96h.1M994 102h.1M832 232h.1M936 304h.1M984 306h.1M1036 292h.1M1180 306h.1M1252 190h.1M1336 236h.1M1160 554h.1M1320 648h.1M1296 840h.1M1246 862h.1M1064 880h.1M1190 904h.1M1356 898h.1M1462 1082h.1M1206 1154h.1M1250 1180h.1M1296 1096h.1M1548 534h.1M1480 408h.1M1526 252h.1M822 50h.1M564 88h.1M430 148h.1M758 1026h.1M1118 1054h.1"/><use href="#r7" class="core"/></g>
        <g class="rings small"><path id="r8" d="M202 90h.1M244 116h.1M16 188h.1M302 220h.1M328 260h.1M384 314h.1M376 356h.1M516 306h.1M538 326h.1M188 404h.1M388 484h.1M14 404h.1M306 572h.1M344 612h.1M492 606h.1M522 632h.1M556 580h.1M158 742h.1M138 780h.1M184 768h.1M384 868h.1M218 940h.1M430 922h.1M482 918h.1M486 876h.1M612 774h.1M630 816h.1M720 710h.1M756 712h.1M660 942h.1M548 1022h.1M410 1060h.1M272 1038h.1M264 1126h.1M68 1044h.1M254 1270h.1M766 1086h.1M766 1132h.1M804 1130h.1M804 1176h.1M974 1188h.1M624 1216h.1M660 1216h.1M1192 1106h.1M1286 1154h.1M1218 1220h.1M1326 1132h.1M1150 1066h.1M1126 1008h.1M1406 1044h.1M1512 1090h.1M1292 940h.1M1274 892h.1M1152 854h.1M1184 844h.1M1214 836h.1M1144 816h.1M1018 892h.1M1148 646h.1M1178 676h.1M1172 598h.1M1146 496h.1M1114 558h.1M1152 354h.1M1004 354h.1M1038 330h.1M954 358h.1M1168 264h.1M1350 308h.1M1350 372h.1M1290 164h.1M1332 176h.1M1230 114h.1M1384 144h.1M1004 66h.1M894 86h.1M822 140h.1M878 136h.1M830 180h.1M868 260h.1M734 342h.1M790 338h.1M776 376h.1M740 398h.1M836 610h.1M1500 476h.1M1500 584h.1M1500 700h.1M1016 970h.1M1044 960h.1M1026 1002h.1M1054 992h.1"/><use href="#r8" class="core"/></g>
      </g>
      <!-- lower left part: bread, heart hands, puppy -->
      <g transform="translate(-4 620) scale(.3333)">
        <path d="M50 150Q60 110 112 104L106 144Q108 156 118 140L128 100Q150 84 162 92L152 130Q156 146 166 130L180 88Q196 72 212 78L198 120Q204 138 214 116L228 78Q290 74 290 100C290 160 160 190 90 190Q40 184 50 150Z"/>
        <path d="M74 0L84 46Q100 52 196 50L246 20V-8M186 0L196 50M338 18Q306 14 310 40Q314 90 350 94M336-10L346 94Q356 120 390 116Q480 100 516 70Q530 50 520-10M382-10v30q10 16 16 0v-28M450-4q6 24 16 8M524 0Q550 20 524 40"/>
        <path d="M12 206Q50 220 100 214Q130 230 128 254Q110 280 90 300Q50 330 24 316Q16 290 12 206ZM38 232L96 292M96 292L116 320M66 244l-6 16M88 264l-4 14M44 264l28-2M60 286l24-8"/>
        <path d="M118 338L260 286Q270 286 274 296L302 376Q302 386 292 390L182 432Q174 434 168 420L144 362ZM182 352L246 330q12 4 4 14L186 364q-12-4-4-12ZM192 380L244 360q12 4 4 14L198 390q-12-2-6-10Z"/>
        <path d="M342 162L382 172L372 210L396 220L354 264L358 230L330 228Z"/><use href="#star" x="536" y="196"/><use href="#star" transform="translate(368 414) scale(1.3)"/><use href="#star" x="606" y="490"/><use href="#note" transform="translate(442 300) scale(.9)"/>
        <path d="M590-10L622 150Q630 168 650 168L760 150Q780 144 782 130M598 46Q580 50 580 80Q586 120 604 126L614 146M730 24Q760 20 770 50L784 100Q780 110 736 112Q720 60 730 24ZM760 0l10 40M748 112q14 24 34 12M652 206Q650 186 680 188L674 170M654 208L700 216L748 202L742 154M700 210Q690 180 718 182L716 160M606-6C610 70 720 70 728-6M640 0q16 20 32 0"/>
        <path d="M940 2Q910 6 918 40Q870 30 872 80Q876 110 910 92Q880 130 920 146Q950 150 960 120"/><ellipse cx="948" cy="76" rx="12" ry="12"/>
        <path d="M514 356Q510 300 560 270Q600 240 640 264L660 276Q700 280 694 304Q690 320 660 318Q620 310 624 350Q640 390 680 392Q720 396 716 420Q710 440 640 426Q600 434 570 432Q564 460 530 446Q480 410 484 376Q490 350 514 356ZM590 304Q610 274 660 278M706 302Q704 240 780 234Q830 230 890 326Q930 320 924 350Q890 420 856 408Q840 400 846 384Q800 390 780 414Q740 440 732 418Q730 396 760 388Q800 370 794 320Q770 280 730 308Q706 320 706 302ZM718 272Q770 240 824 292M712 374Q680 350 690 340Q706 330 712 346Q726 324 734 350Q730 362 712 374Z"/>
        <path d="M28 384Q22 364 40 364Q56 366 50 384Q78 396 82 420L108 550L36 566L10 420Q12 392 28 384M36 558l70-12"/><use href="#drop" x="56" y="468"/>
        <path d="M262 446Q240 560 330 570M262 446Q278 430 268 480Q260 560 370 564M364 570C350 520 390 500 420 510Q440 530 436 570M384 506Q420 450 480 462Q540 480 542 570M446 468Q470 450 506 484M508 536q20-14 20 4q-16 4-6 16"/>
        <path d="M676 510L856 458Q870 458 872 470L902 570M660 520Q660 510 676 504M660 520L672 570M682 526L850 480L878 570M682 526L694 570M750 484L806 438L834 460"/><ellipse cx="828" cy="514" rx="16" ry="16"/>
        <g class="rings"><path id="r9" d="M14 144h.1M288 180h.1M170 252h.1M272 224h.1M232 222h.1M548 122h.1M828 54h.1M898 188h.1M948 188h.1M122 406h.1M202 484h.1M196 534h.1M344 488h.1M442 380h.1M502 250h.1M502 120h.1M442 198h.1M304 276h.1"/><use href="#r9" class="core"/></g>
        <g class="rings small"><path id="r10" d="M192 216h.1M422 158h.1M460 148h.1M424 242h.1M354 320h.1M462 414h.1M306 450h.1M318 516h.1M144 476h.1M832 112h.1M806 180h.1M932 220h.1M894 250h.1M914 428h.1M946 404h.1"/><use href="#r10" class="core"/></g>
        <path class="dots" d="M482 522h.1"/>
      </g>
      <!-- bottom strip: laptop, monkey, book -->
      <g transform="translate(0 800) scale(.4337 .3333)">
        <path d="M400 234L116 200Q94 198 90 220L76 466L400 506M400 256L116 230Q104 230 104 240L90 430Q90 440 100 442L400 474M76 466L38 466Q30 484 50 508L400 550M180 484L186 498L266 510L274 496"/><ellipse cx="230" cy="352" rx="56" ry="74"/><path d="M172 412L178 370C176 260 280 260 276 350C274 400 230 420 200 404ZM206 330Q214 310 222 340L222 356L240 370L250 370Q252 390 236 388Q206 370 206 330Z"/>
        <use href="#star" transform="translate(32 386) scale(.75 .9)"/><use href="#bell" transform="translate(30 260) scale(.6 .8)"/><use href="#heart" x="150" y="84"/><use href="#drop" x="70" y="86"/><use href="#drop" x="38" y="150"/>
        <use href="#compass" transform="translate(30 664) scale(1.08 1.12)"/><use href="#star" transform="translate(130 612) scale(.7 .9)"/>
        <path d="M174 556L200 560L196 606L170 602ZM238 562L266 566L262 606L234 600ZM198 602L234 600L232 622L242 640V684L228 682V654L196 650V680L180 678L184 620ZM296 628C260 660 280 710 320 710C360 700 370 650 350 620M300 574L334 604L318 638L310 618Q280 650 300 690"/>
        <use href="#chat" transform="translate(172 814) scale(.95 1)"/><use href="#chat" transform="translate(262 926) scale(-1 1) rotate(22)"/>
        <use href="#star" transform="translate(520 744) scale(.95 1.2)"/><path d="M404 794L500 820L494 850L446 826L484 866L468 896Z"/><use href="#note" x="572" y="816"/>
        <ellipse cx="718" cy="776" rx="70" ry="102"/><path d="M660 780C640 730 700 710 720 760C730 700 790 720 778 780Q760 800 770 830Q750 880 720 878Q680 860 676 810ZM706 832Q730 846 750 820Q750 850 730 850Q714 850 706 832M640 714Q610 720 612 780Q620 830 646 818M766 690Q790 660 800 690Q824 730 814 780M630 830L636 910Q650 940 672 910L650 830ZM798 780Q810 750 820 790L838 860Q840 880 820 874Z"/><ellipse cx="690" cy="780" rx="7" ry="14"/><ellipse cx="748" cy="760" rx="7" ry="14"/>
        <ellipse cx="870" cy="660" rx="44" ry="58"/><ellipse cx="1020" cy="676" rx="74" ry="96"/><ellipse cx="1020" cy="676" rx="62" ry="80"/><path d="M1016 690Q994 740 1012 752Q1036 750 1016 690ZM1020 690Q1050 750 1062 730Q1068 710 1020 690ZM1006 690Q960 700 966 716Q980 740 1006 690M1014 664Q990 620 1012 606Q1040 610 1024 664ZM1034 668Q1060 620 1070 640Q1080 660 1034 676ZM1002 668Q970 630 964 650Q960 670 1002 676Z"/>
        <path d="M1116 700L1136 686L1180 740L1176 754L1242 866L1232 876L1150 746ZM1142 700l8-10M1154 722l10-12M1166 738l8-10M1270 680Q1290 660 1320 672Q1380 700 1370 760Q1340 820 1310 812L1270 770ZM1270 740L1250 790Q1240 810 1260 812L1290 806M1404 680Q1400 730 1440 740Q1480 740 1480 700"/><ellipse cx="1492" cy="704" rx="20" ry="28"/><ellipse cx="1492" cy="704" rx="11" ry="14"/>
        <path d="M900 850L1020 826L1130 784Q1140 786 1142 800L1168 980Q1170 994 1150 1000L1056 1020L950 1066Q938 1068 934 1054L894 874Q892 856 900 850ZM1020 826L1056 1020M1020 826Q1060 790 1120 772L1130 784M906 866L944 1056M942 906l52-16q8 6 0 12l-50 18q-10-6-2-14ZM1040 846L1052 880L1060 850L1070 872L1074 840M1082 848l46-14q8 4 2 10l-46 16q-8-4-2-12ZM1064 890l60-20q8 4 2 12l-60 20q-8-4-2-12ZM1068 924l60-20q8 4 2 12l-60 20q-8-4-2-12ZM1074 964l38-12q8 4 2 12l-38 14q-8-4-2-14ZM978 940q14 2 8 22q20 0 18 14q-16 4-10 24q-12 8-18-10q-16 10-20 0q8-14-2-20q0-14 18-8Z"/>
        <path d="M528 880Q560 886 594 912L570 970L540 1084Q500 1090 490 1050L504 990ZM510 970Q550 960 570 984M500 1020Q540 1010 556 1040M540 890l-6 16M558 896l-6 16M576 904l-6 16"/><ellipse cx="510" cy="1082" rx="12" ry="16"/>
        <use href="#cloud" transform="translate(640 1008) scale(.95 1.2)"/><path d="M698 946Q730 930 752 950L766 916L760 902L798 888V936L782 924L762 970L790 972L792 952L816 970L800 1004L786 986L744 974Q740 1010 718 1012Q716 996 730 976Q720 954 698 958Z"/>
        <use href="#spark" x="1198" y="902"/><use href="#camera" transform="translate(1312 906) scale(.95 1)"/><path d="M1476 900Q1480 780 1510 760Q1550 760 1536 830Q1530 900 1490 916ZM1484 850L1510 820L1530 850M1396 880Q1390 840 1420 836Q1450 850 1454 900Q1480 960 1460 986Q1430 980 1396 880ZM1408 900L1440 890L1456 930"/>
        <path d="M240 1122Q230 1080 260 1064L464 964Q470 1000 452 1122M310 1122C290 1040 340 1030 364 1070Q380 1090 360 1122M570 1072Q620 1060 612 1122M756 1122L748 1050L806 1020L840 1050L852 1122M806 1020L816 1056L840 1050M780 1080l-14 16l16 12M808 1074l-14 40M820 1080l14 12l-12 14M1260 1122C1240 1010 1300 980 1340 984Q1400 1000 1400 1122M1274 1122Q1270 1060 1310 1020Q1340 1060 1384 1060M1300 1100h6M1356 1092h6M1324 1116q14 10 24-4M1520 1122L1560 970M0 1030Q40 1010 60 1040Q90 1060 74 1090Q40 1110 0 1100"/><ellipse cx="424" cy="1098" rx="34" ry="42"/><path d="M424 1070v52M404 1080l40 36"/><ellipse cx="1200" cy="1056" rx="34" ry="42"/><path d="M1186 1034L1216 1056L1206 1060L1212 1078L1200 1066L1192 1074Z"/>
        <use href="#spark" transform="translate(180 1062) scale(.9 1.1)"/><use href="#spark" transform="translate(662 1092) scale(.9)"/><use href="#star" transform="translate(1464 1070) scale(.8 .95)"/>
        <g class="rings"><path id="r11" d="M98 42h.1M66 542h.1M108 550h.1M124 698h.1M106 742h.1M26 848h.1M312 766h.1M428 750h.1M394 746h.1M356 826h.1M408 942h.1M116 934h.1M90 1000h.1M128 1002h.1M264 1018h.1M584 694h.1M866 790h.1M928 792h.1M852 944h.1M890 1052h.1M1206 972h.1M1226 716h.1M1524 932h.1M1554 906h.1M1438 788h.1M734 1098h.1M926 1106h.1"/><use href="#r11" class="core"/></g>
        <g class="rings small"><path id="r12" d="M166 28h.1M98 160h.1M16 504h.1M152 714h.1M188 716h.1M36 790h.1M322 818h.1M364 750h.1M440 680h.1M458 726h.1M540 684h.1M400 860h.1M424 906h.1M494 914h.1M34 906h.1M68 914h.1M66 968h.1M232 1030h.1M296 1024h.1M894 758h.1M898 808h.1M922 730h.1M960 800h.1M858 894h.1M880 966h.1M1030 1072h.1M1062 1084h.1M1104 1056h.1M1130 1042h.1M1176 698h.1M1218 760h.1M1386 792h.1M1460 776h.1M1380 834h.1M1404 972h.1M1422 1002h.1M706 1056h.1M884 1106h.1"/><use href="#r12" class="core"/></g>
      </g>
    </symbol>
    <symbol id="ticks" viewBox="0 0 28 18"><path d="M1 10L8 17L20 1M13 15L15 17L27 1" fill="none" stroke="#69bdf4" stroke-width="2.6" stroke-linecap="round" stroke-linejoin="round"/></symbol>
    <linearGradient id="face" x1="0" y1="0" x2="0" y2="1"><stop offset="0" stop-color="#fff7a5"/><stop offset=".35" stop-color="#fbe55a"/><stop offset=".7" stop-color="#f8c144"/><stop offset="1" stop-color="#e38f2c"/></linearGradient>
    <radialGradient id="edge"><stop offset=".8" stop-color="#ee9a27" stop-opacity="0"/><stop offset="1" stop-color="#df8424" stop-opacity=".75"/></radialGradient>
    <radialGradient id="blush"><stop offset="0" stop-color="#f4732c" stop-opacity=".8"/><stop offset="1" stop-color="#f4802c" stop-opacity="0"/></radialGradient>
  </defs>
  <use href="#tile"/><use href="#tile" x="824"/><use href="#tile" x="1648"/><use href="#tile" x="2472"/>
</svg>

<main class="chat">
  <section class="group">
    <article class="bubble wide tail">
      <p class="text">wij proberen vanuit Too Good To Go dan ook mensen te inspireren om enerzijds creatief om te gaan met kliekjes (ik noem dat zelf het opwaarderen van de kliek)<br>En anderzijds kijken-proeven-ruiken in plaats van alleen naar de datum te kijken</p>
      <time class="meta">15:46</time>
    </article>
    <article class="bubble">
      <p class="text roomy">pfew <svg class="emoji" viewBox="0 0 88 88" role="img" aria-label="lachend gezicht met zweetdruppel"><circle cx="44" cy="44" r="43" fill="url(#face)"/><circle cx="44" cy="44" r="43" fill="url(#edge)"/><path d="M25 42q2-12 7-12t7 11M50 41q2-12 7-12t7 11" fill="none" stroke="#68451c" stroke-width="4" stroke-linecap="round"/><path d="M16 51Q44 57 72 51Q69 78 44 78Q20 77 16 51Z" fill="#65421a"/><path d="M19 54Q44 60 69 54L67 61Q44 67 21 61Z" fill="#fff"/><path d="M73 7C76 19 87 24 87 34A11 11 0 0 1 65 34C65 24 71 18 73 7Z" fill="#74cbec"/><path d="M73 16q-5 12-1 18" stroke="#d5f3fc" stroke-width="4" fill="none"/></svg> ...en correct, laten we het daarop houden: teveel <svg class="emoji" viewBox="0 0 88 88" role="img" aria-label="knipogend gezicht"><circle cx="44" cy="44" r="43" fill="url(#face)"/><circle cx="44" cy="44" r="43" fill="url(#edge)"/><ellipse cx="30" cy="46" rx="5" ry="8" fill="#674319"/><path d="M15 35q5-11 14-9M54 34q8-4 15 1M52 51q10-9 20-2M33 66q12 9 24-1q-2 11-12 11t-12-10Z" fill="none" stroke="#674319" stroke-width="4" stroke-linecap="round"/></svg></p>
      <time class="meta">15:47</time>
    </article>
  </section>

  <section class="group own">
    <article class="bubble wide tail">
      <blockquote class="quote">
        <cite class="author">Geertje Zeegers</cite>
        <p class="excerpt">wij proberen vanuit Too Good To Go dan ook mensen te inspireren om enerzijds creatief om te gaan met kliekjes (ik noem dat zelf het opwaarderen van de kliek)...</p>
      </blockquote>
      <p class="text">ik wilde inderdaad vragen wat andere manieren zijn om voedselverspilling tegen te gaan</p>
      <div class="meta"><time>15:48</time><svg class="ticks" role="img" aria-label="gelezen"><use href="#ticks"/></svg></div>
    </article>
  </section>

  <section class="group">
    <article class="bubble tail sticker">
      <svg class="emoji-large" viewBox="0 0 88 88" role="img" aria-label="blozend lachend gezicht"><circle cx="44" cy="44" r="43" fill="url(#face)"/><circle cx="44" cy="44" r="43" fill="url(#edge)"/><circle cx="19" cy="51" r="15" fill="url(#blush)"/><circle cx="70" cy="51" r="15" fill="url(#blush)"/><path d="M14 31Q22 22 34 27Q23 27 14 31ZM55 27Q66 22 75 31Q65 27 55 27Z" fill="#70451b" stroke="#70451b" stroke-width="2" stroke-linejoin="round"/><path d="M22 46Q30 39 37 45M51 45Q58 39 66 46" fill="none" stroke="#70451b" stroke-width="5" stroke-linecap="round"/><path d="M31 63Q43 72 56 63Q52 73 44 73Q35 72 31 63Z" fill="#70451b"/></svg>
      <time class="meta">15:48</time>
    </article>
    <article class="bubble wide">
      <p class="text">heel veel (!). de belangrijkste: kijk-proef-ruik ipv alleen THT te bekijken. Heel veel producten zijn nog prima houdbaar na de THT</p>
      <time class="meta">15:49</time>
    </article>
    <article class="bubble wide">
      <p class="text">en hoe saai het ook klinkt: boodschappenlijstjes helpen ook echt. dan plan je beter en blijft er minder over</p>
      <time class="meta">15:49</time>
    </article>
  </section>

  <section class="group own">
    <article class="bubble tail">
      <p class="text roomy">ja precies</p>
      <div class="meta"><time>15:49</time><svg class="ticks" role="img" aria-label="gelezen"><use href="#ticks"/></svg></div>
    </article>
    <article class="bubble wide">
      <p class="text">Too Good To Go gaat samenwerken met Planetly om klimaatneutraal+ te</p>
    </article>
  </section>
</main>
</body>
</html>
```
FILE: styles.css
```css
* {
  box-sizing: border-box;
}

body {
  margin: 0;
  background: #e4dcd6;
  color: #303030;
  font-family: Inter, "Open Sans", sans-serif;
}

p,
blockquote {
  margin: 0;
}

/* Doodle wallpaper */
.wallpaper {
  position: fixed;
  inset: 0;
  z-index: -1;
  width: 100%;
  height: 100%;
}

#tile,
#star, #spark, #heart, #drop, #note, #cloud,
#pin, #camera, #bell, #mail, #chat, #people, #smile, #compass {
  fill: none;
  stroke: #dad1cb;
  stroke-width: 2px;
  stroke-linejoin: round;
  stroke-linecap: round;
}

.wallpaper path,
.wallpaper ellipse,
.wallpaper rect,
.wallpaper text {
  vector-effect: non-scaling-stroke;
}

.wallpaper text {
  font-family: "Liberation Sans", sans-serif;
  font-weight: 700;
  stroke-width: 1px;
}

.rings { stroke-width: 13px; }
.rings .core { stroke: #e4dcd6; stroke-width: 9px; }
.rings.small { stroke-width: 9px; }
.rings.small .core { stroke-width: 5px; }
.dots { stroke-width: 6px; }

/* Conversation */
.chat {
  height: 100vh;
  overflow: hidden;
  padding: 12px 60px 0 150px;
  display: flex;
  flex-direction: column;
  gap: 24px;
}

.group {
  flex: none;
  display: flex;
  flex-direction: column;
  align-items: flex-start;
  gap: 4px;
}

.group.own {
  align-items: flex-end;
}

.bubble {
  --paper: #fff;
  position: relative;
  max-width: 65%;
  padding: 14px 14px 14px 18px;
  border-radius: 15px;
  background: var(--paper);
  box-shadow: 0 2px 1px rgba(60, 45, 30, .2);
}

.own .bubble {
  --paper: #e1f6cb;
}

.bubble.wide {
  width: 65%;
}

.bubble.tail {
  border-top-left-radius: 0;
}

.own .bubble.tail {
  border-top-left-radius: 15px;
  border-top-right-radius: 0;
}

.bubble.tail::before {
  content: "";
  position: absolute;
  top: 0;
  left: -12px;
  width: 13px;
  height: 20px;
  background: var(--paper);
  clip-path: polygon(3px 0, 100% 0, 100% 100%, 12px 100%, 0 3px, 1px 0);
}

.own .bubble.tail::before {
  left: auto;
  right: -12px;
  transform: scaleX(-1);
}

.text {
  font-size: 27px;
  font-weight: 450;
  line-height: 38px;
}

.text.roomy {
  padding-right: 104px;
}

.own .text.roomy {
  padding-right: 142px;
}

.meta {
  position: absolute;
  right: 14px;
  bottom: 5px;
  display: flex;
  align-items: center;
  gap: 8px;
  font-size: 23px;
  line-height: 30px;
  color: rgba(0, 0, 0, .45);
}

.own .meta {
  right: 16px;
}

.ticks {
  width: 28px;
  height: 18px;
}

.emoji {
  width: 38px;
  height: 38px;
  margin: 0 4px 2px;
  vertical-align: -11px;
}

.bubble.sticker {
  width: 192px;
  padding: 27px 52px 48px;
}

.emoji-large {
  display: block;
  width: 88px;
  height: 89px;
}

/* Quoted message; its block and the reply below reach closer to the bubble's edge */
.quote {
  margin: -8px -8px 14px -12px;
  padding: 10px 16px 8px;
  border-left: 8px solid #66cb9b;
  border-radius: 15px;
  background: #d8edc1;
}

.quote + .text {
  margin-right: -8px;
}

.author {
  display: block;
  margin-bottom: 2px;
  color: #66cb9b;
  font-size: 25px;
  font-style: normal;
  font-weight: 600;
  line-height: 42px;
}

.excerpt {
  color: rgba(0, 0, 0, .6);
  font-size: 25px;
  line-height: 40px;
}
```
